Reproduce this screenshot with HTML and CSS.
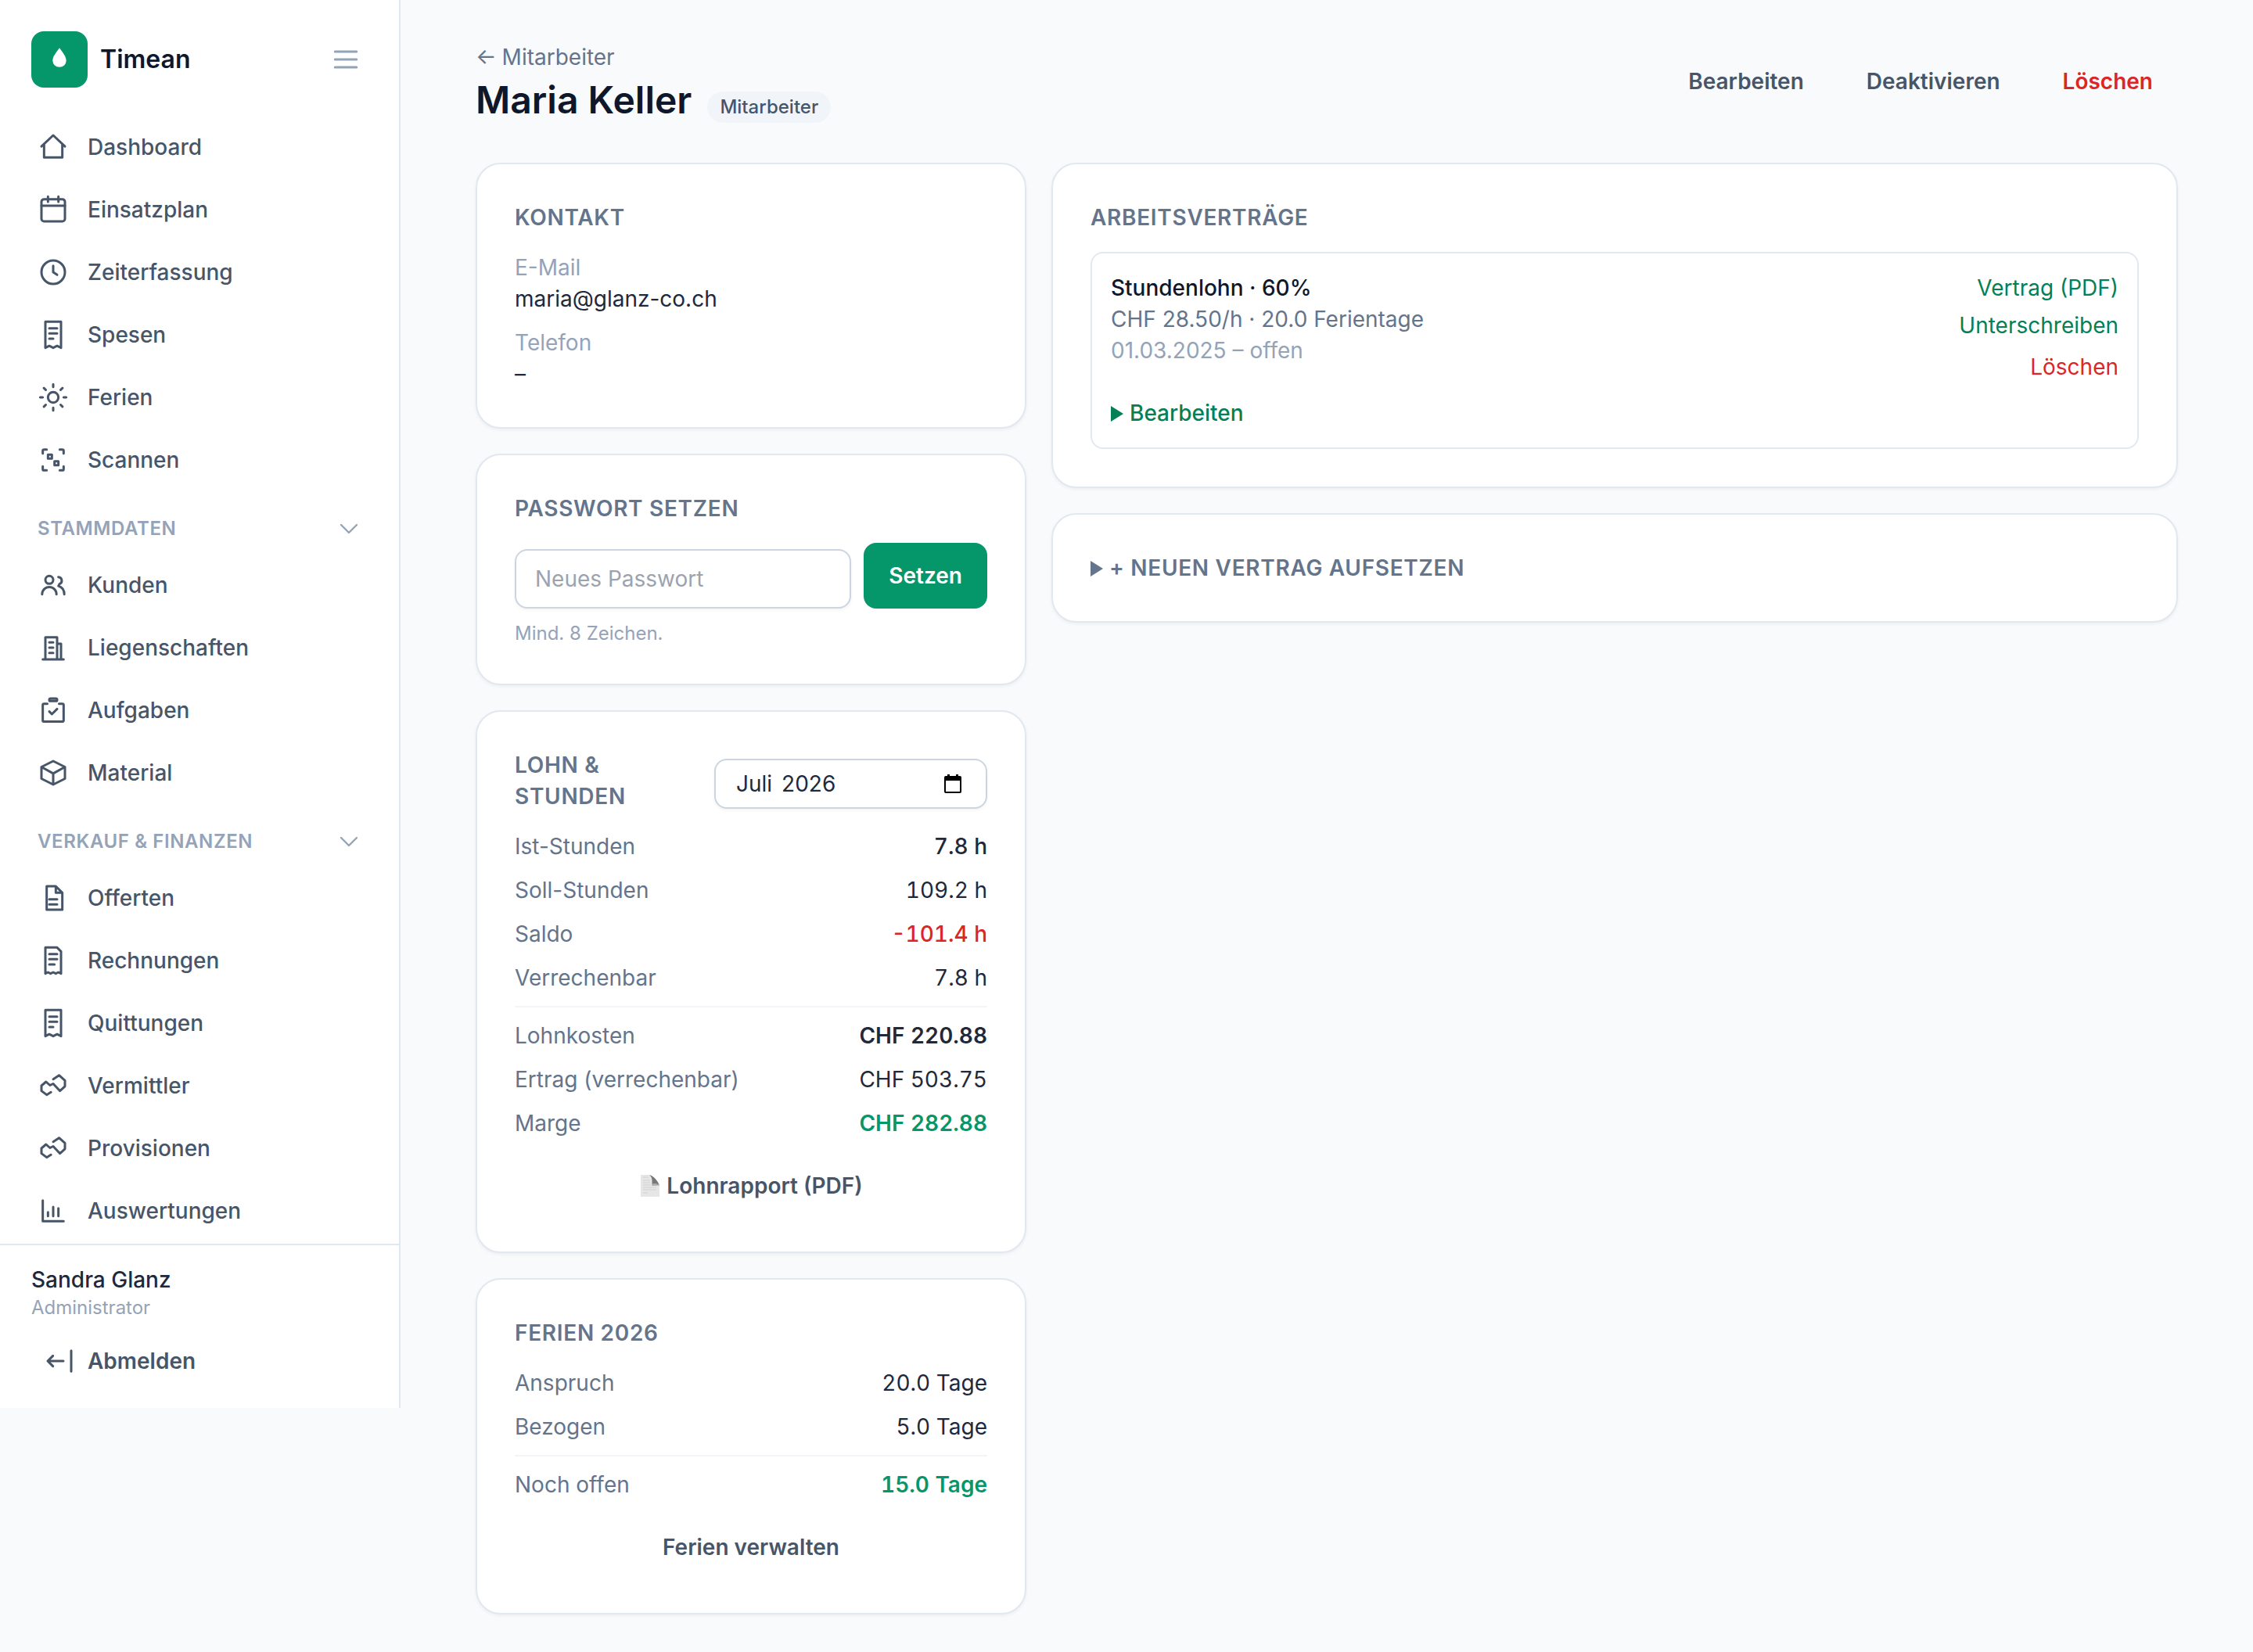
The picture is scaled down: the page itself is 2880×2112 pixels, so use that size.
FILE: index.html
```html
<!DOCTYPE html>
<html lang="de">

<head>
    <meta charset="UTF-8">
    <meta name="viewport" content="width=device-width, initial-scale=1.0">
    <title>Maria Keller – Timean</title>
    <link rel="stylesheet" href="styles.css">
</head>

<body>
    <aside class="sidebar">
        <div class="brand">
            <span class="logo">
                <svg viewBox="0 0 24 24"><path d="M12 3.200c2.600 3.600 5.200 6.600 5.200 9.700a5.200 5 0 0 1-10.400 0C6.800 9.800 9.400 6.800 12 3.200z" /></svg>
            </span>
            <span class="brand-name">Timean</span>
            <button class="menu-btn" aria-label="Menü">
                <svg class="icon" viewBox="0 0 24 24"><path d="M3.750 6h16.500M3.750 12h16.500M3.750 18h16.500" /></svg>
            </button>
        </div>

        <nav class="nav">
            <a href="#"><svg class="icon" viewBox="0 0 24 24"><path d="M3 11.500 12 3l9 8.500M5 10v10h14V10" /></svg>Dashboard</a>
            <a href="#"><svg class="icon" viewBox="0 0 24 24"><rect x="3" y="4" width="18" height="17" rx="2" /><path d="M3 9h18M8 2v4M16 2v4" /></svg>Einsatzplan</a>
            <a href="#"><svg class="icon" viewBox="0 0 24 24"><circle cx="12" cy="12" r="9" /><path d="M12 7v5l3 2" /></svg>Zeiterfassung</a>
            <a href="#"><svg class="icon" viewBox="0 0 24 24"><path d="M6 2h12v20l-3-1.500-3 1.500-3-1.500L6 22zM9 7h6M9 11h6M9 15h3" /></svg>Spesen</a>
            <a href="#"><svg class="icon" viewBox="0 0 24 24"><circle cx="12" cy="12" r="4" /><path d="M12 2v2M12 20v2M2 12h2M20 12h2M4.900 4.900l1.400 1.400M17.700 17.700l1.400 1.400M4.900 19.100l1.400-1.400M17.700 6.300l1.400-1.400" /></svg>Ferien</a>
            <a href="#"><svg class="icon" viewBox="0 0 24 24"><path d="M4 7V5a1 1 0 0 1 1-1h2M17 4h2a1 1 0 0 1 1 1v2M20 17v2a1 1 0 0 1-1 1h-2M7 20H5a1 1 0 0 1-1-1v-2M8 8h3v3H8zM13 13h3v3h-3z" /></svg>Scannen</a>

            <button class="nav-group">Stammdaten<svg class="chevron" viewBox="0 0 24 24"><path d="m19.500 8.250-7.500 7.500-7.500-7.500" /></svg></button>
            <a href="#"><svg class="icon" viewBox="0 0 24 24"><circle cx="9" cy="8" r="3" /><path d="M3.500 19a5.500 5.500 0 0 1 11 0M16 5.800a2.800 2.800 0 0 1 .8 5.400l-.8 1.500c2.700.9 4.500 3.200 4.500 6.300" /></svg>Kunden</a>
            <a href="#"><svg class="icon" viewBox="0 0 24 24"><path d="M4 21h16M6 21V4h9v17M15 9h3v12M9 8h3M9 12h3M9 16h3" /></svg>Liegenschaften</a>
            <a href="#"><svg class="icon" viewBox="0 0 24 24"><rect x="9" y="3" width="6" height="2" rx="1" /><path d="M7.500 7H5a1 1 0 0 0-1 1v12a.7.7 0 0 0 .7.7h14.600a.7.7 0 0 0 .7-.7V8a1 1 0 0 0-1-1h-2.500M9 13l2 2 4-4" /></svg>Aufgaben</a>
            <a href="#"><svg class="icon" viewBox="0 0 24 24"><path d="M12 3l9 4.500v9L12 21l-9-4.500v-9zM3 7.500l9 5 9-5M12 12.500V21" /></svg>Material</a>

            <button class="nav-group">Verkauf &amp; Finanzen<svg class="chevron" viewBox="0 0 24 24"><path d="m19.500 8.250-7.500 7.500-7.500-7.500" /></svg></button>
            <a href="#"><svg class="icon" viewBox="0 0 24 24"><path d="M7 3h7l5 5v13H7zM14 3v5h5M9 13h6M9 17h6" /></svg>Offerten</a>
            <a href="#"><svg class="icon" viewBox="0 0 24 24"><path d="M6 2h9l3 3v17l-2-1-2 1-2-1-2 1-2-1-2 1zM9 7h6M9 11h6M9 15h4" /></svg>Rechnungen</a>
            <a href="#"><svg class="icon" viewBox="0 0 24 24"><path d="M6 2h12v20l-3-1.500-3 1.500-3-1.500L6 22zM9 7h6M9 11h6M9 15h3" /></svg>Quittungen</a>
            <a href="#"><svg class="icon" viewBox="0 0 24 24"><path d="M10.300 17 7 19l-4-3v-4l3.500-3 3 2.700 2.500-1.200 5.200 5.500 3.800-3.500V8l-4.500-4L12 7" /></svg>Vermittler</a>
            <a href="#"><svg class="icon" viewBox="0 0 24 24"><path d="M10.300 17 7 19l-4-3v-4l3.500-3 3 2.700 2.500-1.200 5.200 5.500 3.800-3.500V8l-4.500-4L12 7" /></svg>Provisionen</a>
            <a href="#"><svg class="icon" viewBox="0 0 24 24"><path d="M4 4v16h16M8 13v3M12 9v7M16 10v6" /></svg>Auswertungen</a>
        </nav>

        <div class="user">
            <div class="user-name">Sandra Glanz</div>
            <div class="user-role">Administrator</div>
            <button class="logout"><svg class="icon" viewBox="0 0 24 24"><path d="M15 12H3M7 8l-4 4 4 4M21 4v16" /></svg>Abmelden</button>
        </div>
    </aside>

    <main class="main">
        <header class="page-header">
            <div>
                <div class="back"><a href="#">← Mitarbeiter</a></div>
                <div class="title-row">
                    <h1>Maria Keller</h1>
                    <span class="badge">Mitarbeiter</span>
                </div>
            </div>
            <div class="actions">
                <button class="btn">Bearbeiten</button>
                <button class="btn">Deaktivieren</button>
                <button class="btn danger">Löschen</button>
            </div>
        </header>

        <div class="columns">
            <div class="col">
                <section class="card">
                    <h2>Kontakt</h2>
                    <dl class="contact">
                        <div>
                            <dt>E-Mail</dt>
                            <dd>maria@glanz-co.ch</dd>
                        </div>
                        <div>
                            <dt>Telefon</dt>
                            <dd>–</dd>
                        </div>
                    </dl>
                </section>

                <section class="card">
                    <h2>Passwort setzen</h2>
                    <form class="password-form">
                        <input class="input" type="password" placeholder="Neues Passwort">
                        <button class="btn primary" type="button">Setzen</button>
                    </form>
                    <p class="hint">Mind. 8 Zeichen.</p>
                </section>

                <section class="card">
                    <div class="card-head">
                        <h2>Lohn &amp; Stunden</h2>
                        <div class="month">
                            <span>Juli</span><span>2026</span>
                            <svg viewBox="0 0 22 24"><path d="M4 0h3v2h8V0h3v2h2a2 2 0 0 1 2 2v18a2 2 0 0 1-2 2H2a2 2 0 0 1-2-2V4a2 2 0 0 1 2-2h2zM2 8v14h18V8z" fill-rule="evenodd" /></svg>
                        </div>
                    </div>
                    <div class="rows">
                        <div class="row"><span>Ist-Stunden</span><span class="value medium">7.8 h</span></div>
                        <div class="row"><span>Soll-Stunden</span><span class="value">109.2 h</span></div>
                        <div class="row"><span>Saldo</span><span class="value medium negative">-101.4 h</span></div>
                        <div class="row"><span>Verrechenbar</span><span class="value">7.8 h</span></div>
                        <div class="row divided"><span>Lohnkosten</span><span class="value strong">CHF 220.88</span></div>
                        <div class="row"><span>Ertrag (verrechenbar)</span><span class="value">CHF 503.75</span></div>
                        <div class="row"><span>Marge</span><span class="value strong positive">CHF 282.88</span></div>
                    </div>
                    <button class="btn wide">
                        <svg class="doc" viewBox="0 0 24 28">
                            <path d="M0 0h13l11 13v15H0z" fill="#e6e6e6" />
                            <path d="M3 3h7M3 7h9M3 10h9M3 13h10M3 16h17M3 19h17M3 23h6" stroke="#d2d2d2" stroke-width="1" />
                            <path d="M11 0c3 2 4 6 3.500 12C18 11 22 11.500 24 13.500 22 8 17 1.500 11 0z" fill="#777" />
                            <path d="M14.500 12c3.500-1 7.500-.5 9.500 1.500L14.500 14z" fill="#aaa" />
                        </svg>
                        Lohnrapport (PDF)
                    </button>
                </section>

                <section class="card">
                    <h2>Ferien 2026</h2>
                    <div class="rows">
                        <div class="row"><span>Anspruch</span><span class="value">20.0 Tage</span></div>
                        <div class="row"><span>Bezogen</span><span class="value">5.0 Tage</span></div>
                        <div class="row divided"><span>Noch offen</span><span class="value strong positive">15.0 Tage</span></div>
                    </div>
                    <button class="btn wide">Ferien verwalten</button>
                </section>
            </div>

            <div class="col">
                <section class="card">
                    <h2>Arbeitsverträge</h2>
                    <div class="contract">
                        <div class="contract-top">
                            <div>
                                <div class="contract-title">Stundenlohn · 60%</div>
                                <div class="contract-pay">CHF 28.50/h · 20.0 Ferientage</div>
                                <div class="contract-dates">01.03.2025 – offen</div>
                            </div>
                            <div class="contract-links">
                                <a href="#">Vertrag (PDF)</a>
                                <a href="#">Unterschreiben</a>
                                <div class="delete-line"><a class="delete" href="#">Löschen</a></div>
                            </div>
                        </div>
                        <details class="edit">
                            <summary>Bearbeiten</summary>
                        </details>
                    </div>
                </section>

                <section class="card">
                    <details class="new-contract">
                        <summary>+ Neuen Vertrag aufsetzen</summary>
                    </details>
                </section>
            </div>
        </div>
    </main>
</body>

</html>
```
FILE: styles.css
```css
* {
    box-sizing: border-box;
    margin: 0;
    padding: 0;
}

body {
    display: flex;
    align-items: flex-start;
    min-height: 2112px;
    font-family: Inter, "Liberation Sans", sans-serif;
    font-size: 28px;
    line-height: 40px;
    color: #1e293b;
    background: #f8fafc;
}

a {
    color: inherit;
    text-decoration: none;
}

button {
    font: inherit;
    color: inherit;
    background: none;
    border: none;
    cursor: pointer;
}

.icon {
    width: 40px;
    height: 40px;
    flex-shrink: 0;
}

.icon,
.chevron {
    fill: none;
    stroke: currentColor;
    stroke-width: 1.8;
    stroke-linecap: round;
    stroke-linejoin: round;
}

/* Sidebar */
.sidebar {
    display: flex;
    flex-direction: column;
    flex-shrink: 0;
    width: 512px;
    height: 1800px;
    background: white;
    border-right: 2px solid #e2e8f0;
}

.brand {
    display: flex;
    align-items: center;
    gap: 16px;
    padding: 40px 48px 36px 40px;
}

.logo {
    display: flex;
    align-items: center;
    justify-content: center;
    width: 72px;
    height: 72px;
    border-radius: 16px;
    background: #059669;
}

.logo svg {
    width: 40px;
    height: 40px;
    fill: white;
}

.brand-name {
    font-size: 32px;
    font-weight: 600;
    color: #0f172a;
}

.menu-btn {
    display: flex;
    margin-left: auto;
    color: #94a3b8;
}

.nav {
    flex: 1;
    overflow: hidden;
    color: #475569;
}

.nav a {
    display: flex;
    align-items: center;
    gap: 24px;
    height: 80px;
    padding: 0 48px;
    font-weight: 500;
}

.nav-group {
    display: flex;
    align-items: center;
    justify-content: space-between;
    width: 100%;
    height: 80px;
    padding: 16px 48px 0;
    font-size: 24px;
    font-weight: 600;
    letter-spacing: 0.6px;
    text-transform: uppercase;
    color: #94a3b8;
}

.chevron {
    width: 32px;
    height: 32px;
}

.user {
    height: 210px;
    padding: 24px 40px;
    border-top: 2px solid #e2e8f0;
}

.user-name {
    font-weight: 500;
}

.user-role {
    font-size: 24px;
    line-height: 32px;
    color: #94a3b8;
}

.logout {
    display: flex;
    align-items: center;
    gap: 16px;
    height: 72px;
    margin-top: 16px;
    padding: 0 16px;
    font-weight: 600;
    color: #475569;
}

/* Page header */
.main {
    flex: 1;
    padding: 48px 96px;
}

.page-header {
    display: flex;
    align-items: center;
    justify-content: space-between;
    margin-bottom: 48px;
}

.back {
    height: 48px;
    font-size: 32px;
    line-height: 48px;
    color: #64748b;
}

.back a {
    font-size: 28px;
    word-spacing: -1px;
}

.title-row {
    display: flex;
    align-items: flex-end;
    gap: 20px;
    height: 64px;
}

h1 {
    font-size: 48px;
    line-height: 64px;
    font-weight: 600;
    color: #0f172a;
}

.badge {
    margin-bottom: 3px;
    padding: 4px 16px;
    border-radius: 20px;
    font-size: 24px;
    line-height: 32px;
    font-weight: 500;
    color: #475569;
    background: #f1f5f9;
}

.actions {
    display: flex;
    gap: 16px;
}

.btn {
    display: flex;
    align-items: center;
    justify-content: center;
    height: 72px;
    padding: 0 32px;
    border-radius: 16px;
    font-weight: 600;
    color: #475569;
}

.btn.danger {
    color: #dc2626;
}

.btn.primary {
    height: auto;
    color: white;
    background: #059669;
}

.btn.wide {
    width: 100%;
    margin-top: 24px;
}

/* Cards */
.columns {
    display: grid;
    grid-template-columns: 704px 1440px;
    gap: 32px;
    align-items: start;
}

.col {
    display: grid;
    grid-template-columns: minmax(0, 1fr);
    gap: 32px;
}

.card {
    padding: 48px;
    border: 2px solid #e2e8f0;
    border-radius: 32px;
    background: white;
    box-shadow: 0 2px 4px rgba(0, 0, 0, 0.05);
}

h2,
.new-contract {
    font-size: 28px;
    font-weight: 600;
    letter-spacing: 0.7px;
    text-transform: uppercase;
    color: #64748b;
}

h2 {
    margin-bottom: 24px;
}

.contact {
    display: grid;
    gap: 16px;
}

.contact dt {
    color: #94a3b8;
}

.password-form {
    display: flex;
    gap: 16px;
}

.input {
    flex: 1;
    min-width: 0;
    height: 76px;
    margin-top: 8px;
    padding: 0 24px;
    border: 2px solid #cbd5e1;
    border-radius: 16px;
    font: inherit;
    background: white;
    box-shadow: 0 2px 4px rgba(0, 0, 0, 0.05);
}

.input::placeholder {
    color: #9ca3af;
}

.hint {
    margin-top: 16px;
    font-size: 24px;
    line-height: 32px;
    color: #94a3b8;
}

.card-head {
    display: flex;
    align-items: center;
    justify-content: space-between;
    margin-bottom: 24px;
}

.card-head h2 {
    width: 200px;
    margin-bottom: 0;
}

.month {
    display: flex;
    align-items: center;
    gap: 12px;
    width: 349px;
    height: 64px;
    margin-top: 8px;
    padding: 0 31px 0 26px;
    border: 2px solid #cbd5e1;
    border-radius: 16px;
    box-shadow: 0 2px 4px rgba(0, 0, 0, 0.05);
}

.month svg {
    width: 22px;
    height: 24px;
    margin-left: auto;
    fill: black;
}

.rows {
    display: grid;
    gap: 16px;
}

.row {
    display: flex;
    justify-content: space-between;
    color: #64748b;
}

.row.divided {
    padding-top: 16px;
    border-top: 2px solid #f1f5f9;
}

.value {
    color: #1e293b;
    font-variant-numeric: tabular-nums;
}

.medium {
    font-weight: 500;
}

.strong {
    font-weight: 600;
}

.negative {
    color: #dc2626;
}

.positive {
    color: #059669;
}

.doc {
    width: 24px;
    height: 28px;
    margin-left: 2px;
    margin-right: 9px;
}

/* Contracts */
.contract {
    padding: 24px;
    border: 2px solid #e2e8f0;
    border-radius: 16px;
}

.contract-top {
    display: flex;
    justify-content: space-between;
}

.contract-title {
    font-weight: 500;
    color: #0f172a;
}

.contract-pay {
    color: #64748b;
}

.contract-dates {
    color: #94a3b8;
}

.contract-links {
    display: flex;
    flex-direction: column;
    align-items: flex-end;
    gap: 8px;
    color: #048057;
}

.delete-line {
    height: 48px;
    font-size: 32px;
    line-height: 48px;
}

.delete {
    font-size: 28px;
    color: #dc2626;
}

.edit {
    margin-top: 16px;
    font-weight: 500;
    color: #048057;
}

summary {
    display: flex;
    align-items: center;
    gap: 8px;
    cursor: pointer;
}

summary::before {
    content: "";
    margin-top: 1px;
    border-left: 16px solid currentColor;
    border-top: 10px solid transparent;
    border-bottom: 10px solid transparent;
}
```
